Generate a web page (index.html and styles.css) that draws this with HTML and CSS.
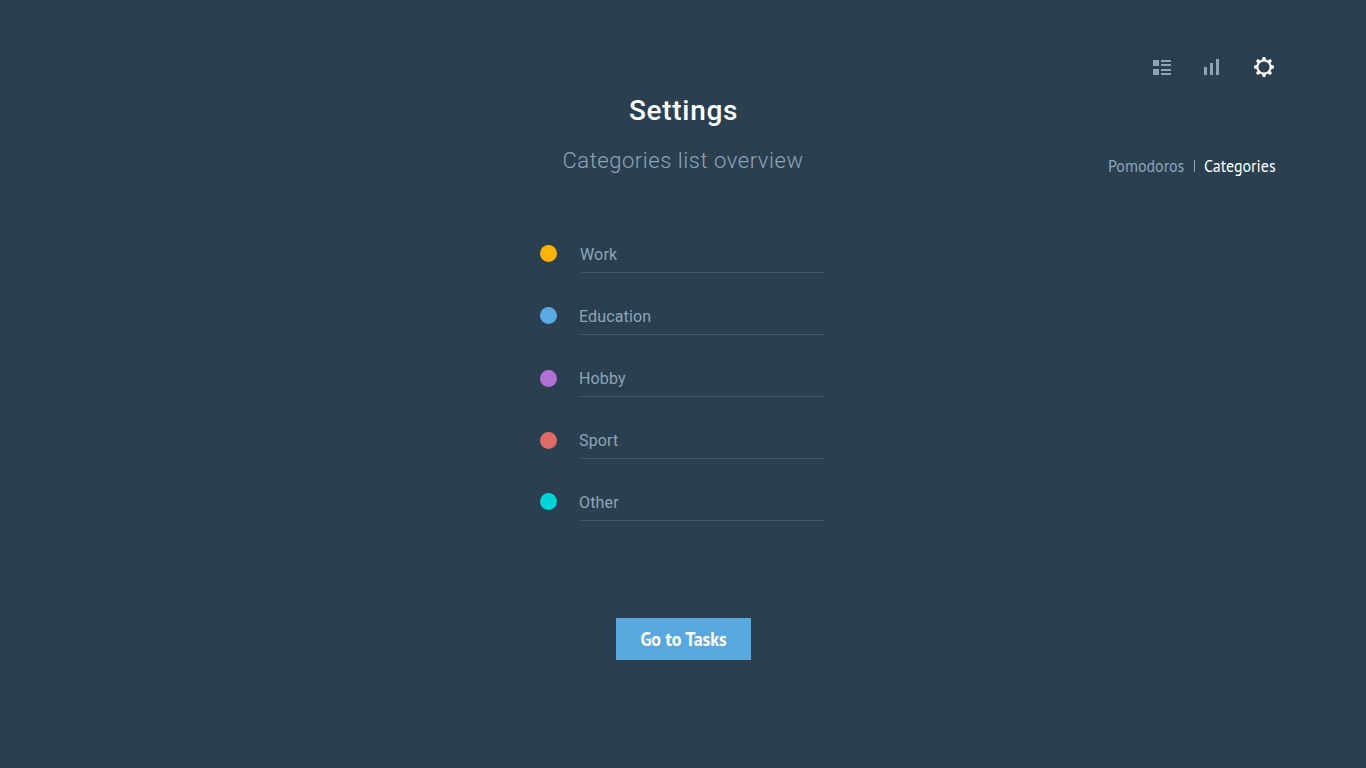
FILE: index.html
```html
<!DOCTYPE html>
<html lang="en">
<head>
<meta charset="utf-8">
<title>Settings</title>
<link rel="stylesheet" href="styles.css">
</head>
<body>
<div class="page">
  <nav class="toolbar">
    <svg class="icon-list" width="18" height="20" viewBox="0 0 18 20" shape-rendering="crispEdges"><path d="M0 3h6v6H0zM8 3h10v2H8zM8 7h10v2H8zM0 12h6v6H0zM8 12h10v2H8zM8 16h10v2H8z"/></svg>
    <svg class="icon-chart" width="15" height="20" viewBox="0 0 15 20" shape-rendering="crispEdges"><path d="M0 10h3v8H0zM6 6h3v12H6zM12 2h3v16h-3z"/></svg>
    <svg class="icon-gear" width="20" height="20" viewBox="-10 -10 20 20">
      <circle r="6.6"/>
      <g id="teeth"><path id="tooth" d="M-2.2 -7L-1.2 -10H1.2L2.2 -7z"/><use href="#tooth" transform="rotate(45)"/><use href="#tooth" transform="rotate(90)"/><use href="#tooth" transform="rotate(135)"/></g>
      <use href="#teeth" transform="rotate(180)"/>
    </svg>
  </nav>
  <header class="heading">
    <h1 class="title">Settings</h1>
    <div class="heading-row">
      <p class="subtitle">Categories list overview</p>
      <div class="tabs">
        <a class="tab">Pomodoros</a>
        <span class="divider"></span>
        <a class="tab tab-active">Categories</a>
      </div>
    </div>
  </header>
  <ul class="categories">
    <li class="category first"><i class="dot work"></i><span class="name">Work</span></li>
    <li class="category"><i class="dot education"></i><span class="name">Education</span></li>
    <li class="category"><i class="dot hobby"></i><span class="name">Hobby</span></li>
    <li class="category"><i class="dot sport"></i><span class="name">Sport</span></li>
    <li class="category"><i class="dot other"></i><span class="name">Other</span></li>
  </ul>
  <button class="button"><span class="button-label">Go to Tasks</span></button>
</div>
</body>
</html>
```
FILE: styles.css
```css
* { box-sizing: border-box; }
body { margin: 0; background: #2a3f50; font-family: Roboto, sans-serif; color: #8da5b8; }
.page { height: 768px; padding-top: 57px; overflow: hidden; display: flex; flex-direction: column; }
.toolbar { display: flex; justify-content: flex-end; height: 20px; padding-right: 92px; }
.toolbar svg { display: block; fill: #8da5b8; }
.icon-chart { margin-left: 33px; }
.toolbar .icon-gear { margin-left: 35px; fill: #fff; }
.toolbar .icon-gear circle { fill: none; stroke: #fff; stroke-width: 2; }
.title { margin: 14px 0 0; padding-left: 1px; height: 40px; line-height: 40px; text-align: center; font-size: 28px; font-weight: 500; letter-spacing: 0.7px; color: #fff; }
.heading-row { display: grid; grid-template-columns: 1fr auto 1fr; height: 49px; margin-top: 10px; }
.subtitle { grid-column: 2; margin: 0; line-height: 40px; font-size: 22px; font-weight: 300; letter-spacing: 0.55px; white-space: nowrap; }
.tabs { display: flex; justify-content: flex-end; align-items: flex-start; padding: 15px 90px 0 0; font-family: "PT Sans", "Noto Sans", sans-serif; font-size: 17px; line-height: 20px; }
.tab { width: 77px; white-space: nowrap; transform: scaleX(0.94); transform-origin: left; }
.tab-active { width: 72px; color: #fff; }
.divider { width: 1px; height: 12px; margin: 4px 9px 0; background: #8da5b8; }
.categories { list-style: none; width: 285px; margin: 46px 0 0 540px; padding: 0; }
.category { display: flex; height: 62px; }
.dot { width: 17px; height: 17px; margin-top: 9px; border-radius: 50%; flex: none; }
.name { width: 245px; height: 37px; margin-left: 23px; line-height: 37px; font-size: 16px; letter-spacing: 0.15px; text-indent: -1px; border-bottom: 1px solid #405669; }
.first .name { width: 243px; margin-left: 24px; }
.hobby, .sport { margin-top: 10px; }
.work { background: #ffb200; }
.education { background: #59abe3; }
.hobby { background: #b371d3; }
.sport { background: #e26a66; }
.other { background: #00d4d9; }
.button { width: 135px; height: 42px; margin: 72px 0 0 616px; padding: 0; border: 0; background: #59a7df; color: #fff; font: 700 19px/42px "PT Sans", "Noto Sans", sans-serif; }
.button-label { display: inline-block; white-space: nowrap; transform: scaleX(0.947); }
```
